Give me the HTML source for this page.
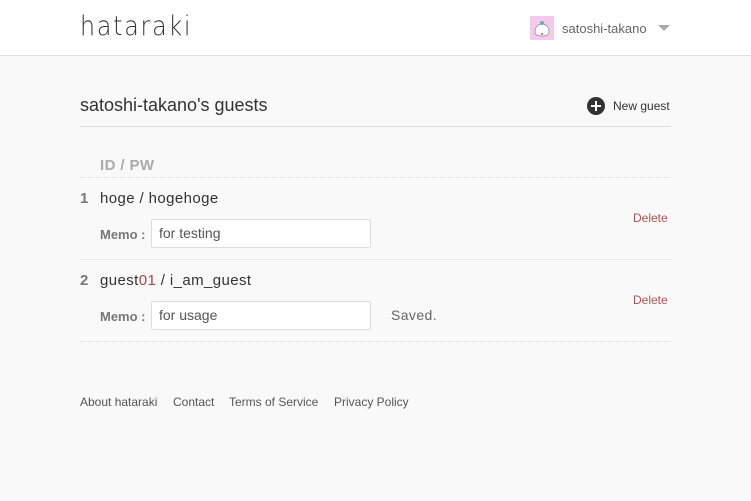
<!DOCTYPE html>
<html><head><meta charset="utf-8"><style>
*{margin:0;padding:0;box-sizing:border-box}
body{width:751px;height:501px;background:#f9f9f9;font-family:"Liberation Sans",sans-serif;color:#333;overflow:hidden;position:relative}
.hd{position:absolute;left:0;top:0;width:751px;height:56px;background:#fff;border-bottom:1px solid #e2e2e2}
.logo{position:absolute;left:80px;top:11px;font-family:"DejaVu Sans",sans-serif;font-weight:200;font-size:27px;letter-spacing:2px;color:#333;transform:scaleX(0.88);transform-origin:left}
.user{position:absolute;left:530px;top:16px;display:flex;align-items:center;font-size:13px;color:#666}
.av{width:24px;height:24px;background:#f5c8ee;margin-right:8px}
.tri{width:0;height:0;border-left:6px solid transparent;border-right:6px solid transparent;border-top:6px solid #aaa;margin-left:11px}
.t{position:absolute;left:80px;top:95px;font-size:18px;color:#333}
.ng{position:absolute;left:587px;top:97px;display:flex;align-items:center;font-size:12px;color:#333}
.ng svg{margin-right:8px}
.ln{position:absolute;left:80px;width:591px;height:0;border-top:1px solid #ddd}
.dot{border-top:1px dotted #ddd}
.txt{position:absolute;font-size:15px;letter-spacing:0.4px;white-space:nowrap}
.num{position:absolute;left:80px;font-size:15px;font-weight:bold;color:#777}
.memo{position:absolute;left:100px;font-size:13px;font-weight:bold;color:#777}
.inp{position:absolute;left:151px;width:220px;height:29px;background:#fff;border:1px solid #ddd;border-radius:2px;font-size:14px;color:#555;padding:5px 7px}
.del{position:absolute;left:633px;font-size:12px;color:#a55}
.ft{position:absolute;top:395px;font-size:12px;color:#555}
</style></head><body>
<div class="hd">
<div class="logo">hataraki</div>
<div class="user"><svg class="av" viewBox="0 0 24 24"><rect width="24" height="24" fill="#f5c8ee"/><path d="M5 16c0-5 3-8 7-8s7 3 7 8c0 3-3 4-7 4s-7-1-7-4z" fill="#fff" stroke="#888" stroke-width=".7"/><circle cx="12" cy="7" r="2" fill="#6ab"/><circle cx="12" cy="18" r="1" fill="#e44"/></svg>satoshi-takano<div class="tri"></div></div>
</div>
<div class="t">satoshi-takano's guests</div>
<div class="ng"><svg width="18" height="18" viewBox="0 0 18 18"><circle cx="9" cy="9" r="9" fill="#333"/><path d="M9 4v10M4 9h10" stroke="#fff" stroke-width="2"/></svg>New guest</div>
<div class="ln" style="top:126px"></div>
<div class="txt" style="left:100px;top:157px;font-size:15px;font-weight:bold;color:#aaa">ID / PW</div>
<div class="ln dot" style="top:177px"></div>
<div class="num" style="top:190px">1</div>
<div class="txt" style="left:100px;top:190px">hoge / hogehoge</div>
<div class="memo" style="top:227px">Memo :</div>
<div class="inp" style="top:219px">for testing</div>
<div class="del" style="top:211px">Delete</div>
<div class="ln dot" style="top:259px"></div>
<div class="num" style="top:272px">2</div>
<div class="txt" style="left:100px;top:272px">guest<span style="color:#a44">01</span> / i_am_guest</div>
<div class="memo" style="top:309px">Memo :</div>
<div class="inp" style="top:301px">for usage</div>
<div class="txt" style="left:391px;top:307px;color:#666;font-size:14px">Saved.</div>
<div class="del" style="top:293px">Delete</div>
<div class="ln dot" style="top:341px"></div>
<div class="ft" style="left:80px">About hataraki</div>
<div class="ft" style="left:173px">Contact</div>
<div class="ft" style="left:229px">Terms of Service</div>
<div class="ft" style="left:334px">Privacy Policy</div>
</body></html>
